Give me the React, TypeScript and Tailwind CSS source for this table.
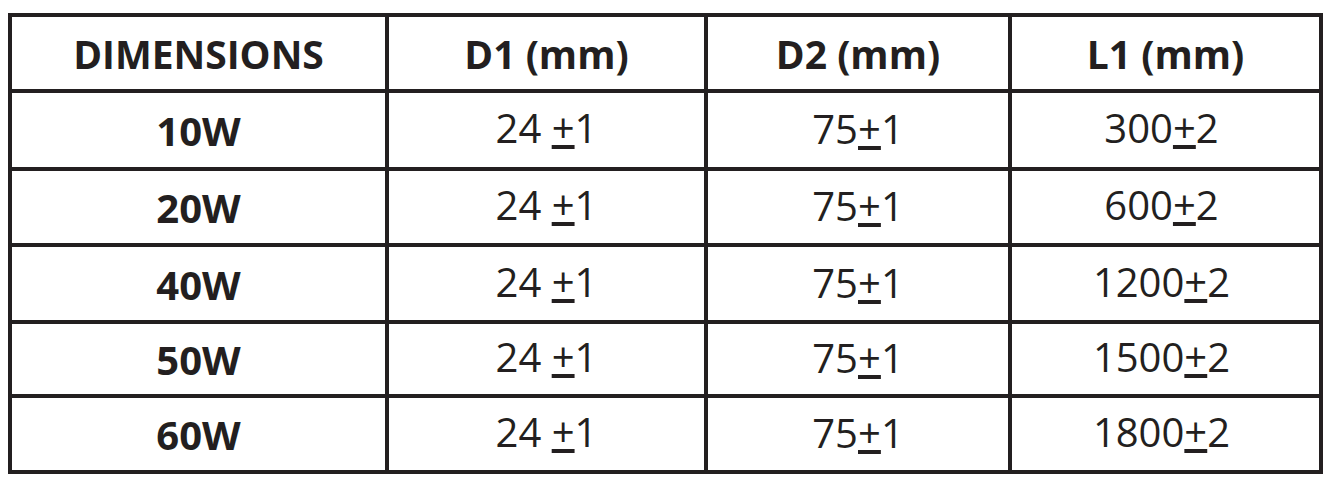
import React from "react";

const cols = ["w-[377px]", "w-[319px]", "w-[304px]", "w-[307px]"];
const rowHeights = ["h-[76px]", "h-[78px]", "h-[76px]", "h-[77px]", "h-[74px]", "h-[72px]"];

const Pm = ({ pre, sign, post }: { pre: string; sign: string; post: string }) => (
  <span>
    {pre}
    <span className="underline decoration-[4px] underline-offset-[2px]">{sign}</span>
    {post}
  </span>
);

const rows: { w: string; l: string }[] = [
  { w: "10W", l: "300" },
  { w: "20W", l: "600" },
  { w: "40W", l: "1200" },
  { w: "50W", l: "1500" },
  { w: "60W", l: "1800" },
];

export default function App() {
  return (
    <div
      className="w-[1339px] h-[489px] bg-white text-[#231f20] pt-[13px] pl-[8px]"
      style={{ fontFamily: '"Open Sans", "Noto Sans", sans-serif' }}
    >
      <div className="w-[1315px] border-[4px] border-[#231f20] flex flex-col">
        <div className={`flex ${rowHeights[0]} border-b-[4px] border-[#231f20] font-bold text-[39px]`}>
          {["DIMENSIONS", "D1 (mm)", "D2 (mm)", "L1 (mm)"].map((t, i) => (
            <div
              key={t}
              className={`${cols[i]} ${i < 3 ? "border-r-[4px]" : ""} border-[#231f20] flex items-center justify-center leading-none`}
            >
              {t}
            </div>
          ))}
        </div>
        {rows.map((r, ri) => (
          <div
            key={r.w}
            className={`flex ${rowHeights[ri + 1]} ${ri < 4 ? "border-b-[4px]" : ""} border-[#231f20] text-[40px]`}
          >
            <div className={`${cols[0]} border-r-[4px] border-[#231f20] flex items-center justify-center font-bold leading-none pt-[2px]`}>
              {r.w}
            </div>
            <div className={`${cols[1]} border-r-[4px] border-[#231f20] flex items-center justify-center leading-none pb-[4px]`}>
              <Pm pre={"24\u00a0"} sign="+" post="1" />
            </div>
            <div className={`${cols[2]} border-r-[4px] border-[#231f20] flex items-center justify-center leading-none pb-[2px]`}>
              <Pm pre="75" sign="+" post="1" />
            </div>
            <div className={`${cols[3]} flex items-center justify-center leading-none pb-[4px] pr-[8px]`}>
              <Pm pre={r.l} sign="+" post="2" />
            </div>
          </div>
        ))}
      </div>
    </div>
  );
}
